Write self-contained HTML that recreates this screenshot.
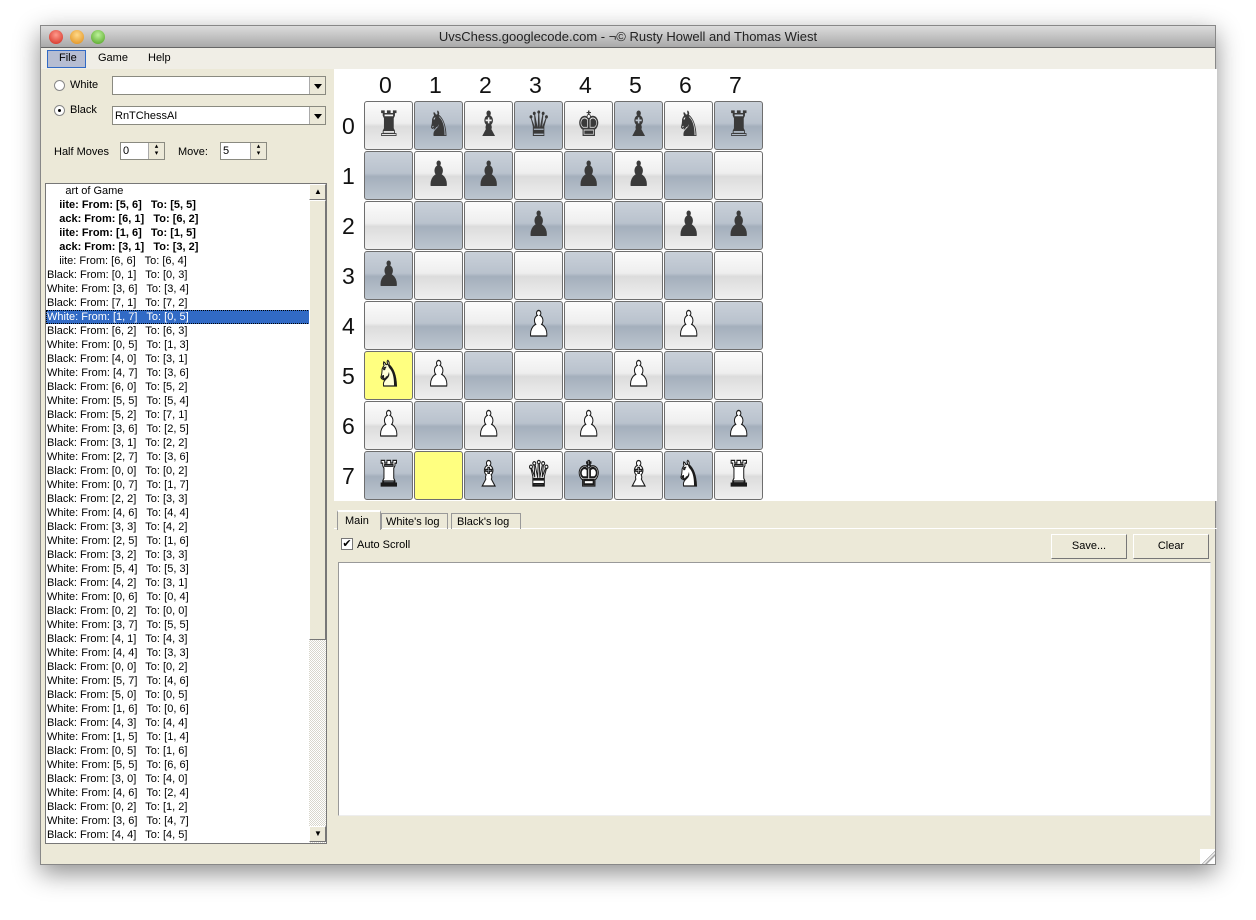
<!DOCTYPE html>
<html><head><meta charset="utf-8">
<style>
*{box-sizing:border-box;margin:0;padding:0}
body{width:1256px;height:920px;background:#fff;position:relative;overflow:hidden;font-family:"Liberation Sans",sans-serif;font-size:11px;color:#000}
.win{position:absolute;left:40px;top:25px;width:1176px;height:840px;background:#ece9d8;box-shadow:0 8px 24px rgba(0,0,0,.45);border:1px solid #888}
.title{position:absolute;left:0;top:0;width:100%;height:22px;background:linear-gradient(#dcdcdc,#a9a9a9);border-bottom:1px solid #666;text-align:center;font-size:13px;line-height:21px;color:#222}
.dot{position:absolute;top:4px;width:14px;height:14px;border-radius:50%}
.menu{position:absolute;left:0;top:22px;width:100%;height:21px;background:#f0eee6}
.menu span{position:absolute;top:3px;font-size:11px;line-height:15px}
.abs{position:absolute}
.combo{position:absolute;background:#fff;border:1px solid #8a8a80;height:19px}
.combo .arr{position:absolute;right:0;top:0;width:16px;height:17px;background:#ece9d8;border-left:1px solid #aaa}
.combo .arr:after{content:"";position:absolute;left:4px;top:7px;border-left:4px solid transparent;border-right:4px solid transparent;border-top:5px solid #000}
.list{position:absolute;left:4px;top:157px;width:282px;height:661px;background:#fff;border:1px solid #777;overflow:hidden}
.list div{height:14px;line-height:14px;white-space:pre;padding-left:1px;font-size:11px}
.list .b{font-weight:bold}
.list .sel{background:#316ac5;color:#fff;outline:1px dotted #000;outline-offset:-1px}
.board{position:absolute;left:293px;top:43px;width:883px;height:432px;background:#fff}
.sq{position:absolute;width:49px;height:49px;border:1px solid #6e6e6e;border-radius:3px;text-align:center;font-family:"DejaVu Sans",sans-serif;font-size:35px;line-height:47px}
.sq span{display:inline-block;transform:scaleX(.78)}
.l{background:linear-gradient(#fbfbfb 0%,#eeeeee 45%,#dcdcdc 52%,#efefef 100%)}
.d{background:linear-gradient(#c9d0d9 0%,#b9c2cd 45%,#a4afbc 52%,#bcc5cf 100%)}
.y{background:#ffff80}
.bp{color:#3a3a3a}
.wp{color:#fff;-webkit-text-stroke:1.3px #1a1a1a}
.lbl{position:absolute;font-size:23px;color:#111}
.btn{position:absolute;height:25px;background:#ece9d8;border:1px solid;border-color:#fff #777 #777 #fff;text-align:center;line-height:23px;font-size:11px}
</style></head><body>
<div class="win">
<div class="title">UvsChess.googlecode.com - ¬© Rusty Howell and Thomas Wiest
<div class="dot" style="left:8px;background:radial-gradient(circle at 50% 35%,#ff9a8c,#d0261a)"></div>
<div class="dot" style="left:29px;background:radial-gradient(circle at 50% 35%,#ffd98a,#de8a13)"></div>
<div class="dot" style="left:50px;background:radial-gradient(circle at 50% 35%,#bdf29a,#4a9e1c)"></div>
</div>
<div class="menu">
<div class="abs" style="left:6px;top:2px;width:39px;height:18px;background:#b6bdd2;border:1px solid #316ac5"></div>
<span style="left:18px">File</span><span style="left:57px">Game</span><span style="left:107px">Help</span>
</div>
<div class="abs" style="left:13px;top:54px;width:11px;height:11px;border-radius:50%;border:1px solid #888;background:#fff"></div>
<div class="abs" style="left:29px;top:53px;font-size:11px">White</div>
<div class="combo" style="left:71px;top:50px;width:214px"><div class="arr"></div></div>
<div class="abs" style="left:13px;top:79px;width:11px;height:11px;border-radius:50%;border:1px solid #888;background:#fff"><div class="abs" style="left:3px;top:3px;width:3px;height:3px;border-radius:50%;background:#000"></div></div>
<div class="abs" style="left:29px;top:78px">Black</div>
<div class="combo" style="left:71px;top:80px;width:214px"><div class="abs" style="left:2px;top:3px">RnTChessAI</div><div class="arr"></div></div>
<div class="abs" style="left:13px;top:120px">Half Moves</div>
<div class="combo" style="left:79px;top:116px;width:45px;height:18px"><div class="abs" style="left:2px;top:2px">0</div><div class="abs" style="right:0;top:0;width:16px;height:16px;background:#ece9d8;border-left:1px solid #aaa;font-size:7px;line-height:7px;text-align:center">▴<br>▾</div></div>
<div class="abs" style="left:137px;top:120px">Move:</div>
<div class="combo" style="left:179px;top:116px;width:47px;height:18px"><div class="abs" style="left:2px;top:2px">5</div><div class="abs" style="right:0;top:0;width:16px;height:16px;background:#ece9d8;border-left:1px solid #aaa;font-size:7px;line-height:7px;text-align:center">▴<br>▾</div></div>
<div class="list">
<div>      art of Game</div>
<div class="b">    iite: From: [5, 6]   To: [5, 5]</div>
<div class="b">    ack: From: [6, 1]   To: [6, 2]</div>
<div class="b">    iite: From: [1, 6]   To: [1, 5]</div>
<div class="b">    ack: From: [3, 1]   To: [3, 2]</div>
<div>    iite: From: [6, 6]   To: [6, 4]</div>
<div>Black: From: [0, 1]   To: [0, 3]</div>
<div>White: From: [3, 6]   To: [3, 4]</div>
<div>Black: From: [7, 1]   To: [7, 2]</div>
<div class="sel">White: From: [1, 7]   To: [0, 5]</div>
<div>Black: From: [6, 2]   To: [6, 3]</div>
<div>White: From: [0, 5]   To: [1, 3]</div>
<div>Black: From: [4, 0]   To: [3, 1]</div>
<div>White: From: [4, 7]   To: [3, 6]</div>
<div>Black: From: [6, 0]   To: [5, 2]</div>
<div>White: From: [5, 5]   To: [5, 4]</div>
<div>Black: From: [5, 2]   To: [7, 1]</div>
<div>White: From: [3, 6]   To: [2, 5]</div>
<div>Black: From: [3, 1]   To: [2, 2]</div>
<div>White: From: [2, 7]   To: [3, 6]</div>
<div>Black: From: [0, 0]   To: [0, 2]</div>
<div>White: From: [0, 7]   To: [1, 7]</div>
<div>Black: From: [2, 2]   To: [3, 3]</div>
<div>White: From: [4, 6]   To: [4, 4]</div>
<div>Black: From: [3, 3]   To: [4, 2]</div>
<div>White: From: [2, 5]   To: [1, 6]</div>
<div>Black: From: [3, 2]   To: [3, 3]</div>
<div>White: From: [5, 4]   To: [5, 3]</div>
<div>Black: From: [4, 2]   To: [3, 1]</div>
<div>White: From: [0, 6]   To: [0, 4]</div>
<div>Black: From: [0, 2]   To: [0, 0]</div>
<div>White: From: [3, 7]   To: [5, 5]</div>
<div>Black: From: [4, 1]   To: [4, 3]</div>
<div>White: From: [4, 4]   To: [3, 3]</div>
<div>Black: From: [0, 0]   To: [0, 2]</div>
<div>White: From: [5, 7]   To: [4, 6]</div>
<div>Black: From: [5, 0]   To: [0, 5]</div>
<div>White: From: [1, 6]   To: [0, 6]</div>
<div>Black: From: [4, 3]   To: [4, 4]</div>
<div>White: From: [1, 5]   To: [1, 4]</div>
<div>Black: From: [0, 5]   To: [1, 6]</div>
<div>White: From: [5, 5]   To: [6, 6]</div>
<div>Black: From: [3, 0]   To: [4, 0]</div>
<div>White: From: [4, 6]   To: [2, 4]</div>
<div>Black: From: [0, 2]   To: [1, 2]</div>
<div>White: From: [3, 6]   To: [4, 7]</div>
<div>Black: From: [4, 4]   To: [4, 5]</div>
<div class="abs" style="left:263px;top:0;width:17px;height:659px;background:repeating-conic-gradient(#d8d6cc 0 25%,#fff 0 50%) 0 0/2px 2px"></div>
<div class="abs" style="left:263px;top:0;width:17px;height:16px;background:#ece9d8;border:1px solid;border-color:#fff #777 #777 #fff;font-size:8px;text-align:center;line-height:14px">▲</div>
<div class="abs" style="left:263px;top:16px;width:17px;height:440px;background:#ece9d8;border:1px solid;border-color:#fff #777 #777 #fff"></div>
<div class="abs" style="left:263px;top:642px;width:17px;height:16px;background:#ece9d8;border:1px solid;border-color:#fff #777 #777 #fff;font-size:8px;text-align:center;line-height:14px">▼</div>
</div>
<div class="board">
<div class="lbl" style="left:45px;top:3px">0</div><div class="lbl" style="left:95px;top:3px">1</div><div class="lbl" style="left:145px;top:3px">2</div><div class="lbl" style="left:195px;top:3px">3</div><div class="lbl" style="left:245px;top:3px">4</div><div class="lbl" style="left:295px;top:3px">5</div><div class="lbl" style="left:345px;top:3px">6</div><div class="lbl" style="left:395px;top:3px">7</div>
<div class="lbl" style="left:8px;top:44px">0</div><div class="lbl" style="left:8px;top:94px">1</div><div class="lbl" style="left:8px;top:144px">2</div><div class="lbl" style="left:8px;top:194px">3</div><div class="lbl" style="left:8px;top:244px">4</div><div class="lbl" style="left:8px;top:294px">5</div><div class="lbl" style="left:8px;top:344px">6</div><div class="lbl" style="left:8px;top:394px">7</div>

<div class="sq l bp" style="left:30px;top:32px"><span>♜</span></div><div class="sq d bp" style="left:80px;top:32px"><span>♞</span></div><div class="sq l bp" style="left:130px;top:32px"><span>♝</span></div><div class="sq d bp" style="left:180px;top:32px"><span>♛</span></div><div class="sq l bp" style="left:230px;top:32px"><span>♚</span></div><div class="sq d bp" style="left:280px;top:32px"><span>♝</span></div><div class="sq l bp" style="left:330px;top:32px"><span>♞</span></div><div class="sq d bp" style="left:380px;top:32px"><span>♜</span></div>

<div class="sq d" style="left:30px;top:82px"></div><div class="sq l bp" style="left:80px;top:82px"><span>♟</span></div><div class="sq d bp" style="left:130px;top:82px"><span>♟</span></div><div class="sq l" style="left:180px;top:82px"></div><div class="sq d bp" style="left:230px;top:82px"><span>♟</span></div><div class="sq l bp" style="left:280px;top:82px"><span>♟</span></div><div class="sq d" style="left:330px;top:82px"></div><div class="sq l" style="left:380px;top:82px"></div>

<div class="sq l" style="left:30px;top:132px"></div><div class="sq d" style="left:80px;top:132px"></div><div class="sq l" style="left:130px;top:132px"></div><div class="sq d bp" style="left:180px;top:132px"><span>♟</span></div><div class="sq l" style="left:230px;top:132px"></div><div class="sq d" style="left:280px;top:132px"></div><div class="sq l bp" style="left:330px;top:132px"><span>♟</span></div><div class="sq d bp" style="left:380px;top:132px"><span>♟</span></div>

<div class="sq d bp" style="left:30px;top:182px"><span>♟</span></div><div class="sq l" style="left:80px;top:182px"></div><div class="sq d" style="left:130px;top:182px"></div><div class="sq l" style="left:180px;top:182px"></div><div class="sq d" style="left:230px;top:182px"></div><div class="sq l" style="left:280px;top:182px"></div><div class="sq d" style="left:330px;top:182px"></div><div class="sq l" style="left:380px;top:182px"></div>

<div class="sq l" style="left:30px;top:232px"></div><div class="sq d" style="left:80px;top:232px"></div><div class="sq l" style="left:130px;top:232px"></div><div class="sq d wp" style="left:180px;top:232px"><span>♟</span></div><div class="sq l" style="left:230px;top:232px"></div><div class="sq d" style="left:280px;top:232px"></div><div class="sq l wp" style="left:330px;top:232px"><span>♟</span></div><div class="sq d" style="left:380px;top:232px"></div>

<div class="sq y wp" style="left:30px;top:282px;color:#ffffd8"><span>♞</span></div><div class="sq l wp" style="left:80px;top:282px"><span>♟</span></div><div class="sq d" style="left:130px;top:282px"></div><div class="sq l" style="left:180px;top:282px"></div><div class="sq d" style="left:230px;top:282px"></div><div class="sq l wp" style="left:280px;top:282px"><span>♟</span></div><div class="sq d" style="left:330px;top:282px"></div><div class="sq l" style="left:380px;top:282px"></div>

<div class="sq l wp" style="left:30px;top:332px"><span>♟</span></div><div class="sq d" style="left:80px;top:332px"></div><div class="sq l wp" style="left:130px;top:332px"><span>♟</span></div><div class="sq d" style="left:180px;top:332px"></div><div class="sq l wp" style="left:230px;top:332px"><span>♟</span></div><div class="sq d" style="left:280px;top:332px"></div><div class="sq l" style="left:330px;top:332px"></div><div class="sq d wp" style="left:380px;top:332px"><span>♟</span></div>

<div class="sq d wp" style="left:30px;top:382px"><span>♜</span></div><div class="sq y" style="left:80px;top:382px"></div><div class="sq d wp" style="left:130px;top:382px"><span>♝</span></div><div class="sq l wp" style="left:180px;top:382px"><span>♛</span></div><div class="sq d wp" style="left:230px;top:382px"><span>♚</span></div><div class="sq l wp" style="left:280px;top:382px"><span>♝</span></div><div class="sq d wp" style="left:330px;top:382px"><span>♞</span></div><div class="sq l wp" style="left:380px;top:382px"><span>♜</span></div>
</div>
<div class="abs" style="left:293px;top:502px;width:883px;height:1px;background:#fff"></div>
<div class="abs" style="left:296px;top:484px;width:44px;height:20px;background:#ece9d8;border:1px solid #999;border-bottom:none;border-top:2px solid #fff;padding:3px 0 0 7px">Main</div>
<div class="abs" style="left:340px;top:487px;width:67px;height:16px;border:1px solid #999;border-bottom:none;padding:2px 0 0 4px">White's log</div>
<div class="abs" style="left:410px;top:487px;width:70px;height:16px;border:1px solid #999;border-bottom:none;padding:2px 0 0 5px">Black's log</div>
<div class="abs" style="left:300px;top:512px;width:12px;height:12px;background:#fff;border:1px solid #777;font-size:11px;line-height:10px;text-align:center">✔</div>
<div class="abs" style="left:316px;top:513px">Auto Scroll</div>
<div class="btn" style="left:1010px;top:508px;width:76px">Save...</div>
<div class="btn" style="left:1092px;top:508px;width:76px">Clear</div>
<div class="abs" style="left:297px;top:536px;width:873px;height:254px;background:#fff;border:1px solid #999;border-right-color:#eee;border-bottom-color:#eee"></div>
<div class="abs" style="right:0;bottom:0;width:15px;height:15px;background:linear-gradient(135deg,#fff 55%,#999 56%,#fff 62%,#999 70%,#fff 76%)"></div>
</div>
</body></html>
